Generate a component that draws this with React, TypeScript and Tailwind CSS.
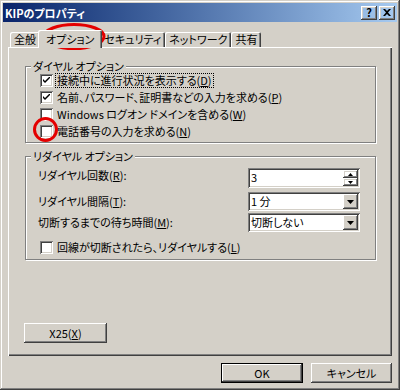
import React from "react";

const raised =
  "shadow-[inset_-1px_-1px_#404040,inset_1px_1px_#ffffff,inset_-2px_-2px_#808080,inset_2px_2px_#d4d0c8]";
const sunken =
  "shadow-[inset_1px_1px_#808080,inset_-1px_-1px_#ffffff,inset_2px_2px_#404040,inset_-2px_-2px_#d4d0c8]";

function Check({ checked }: { checked?: boolean }) {
  return (
    <div className={`w-[13px] h-[13px] bg-white shrink-0 flex items-center justify-center ${sunken}`}>
      {checked && (
        <svg width="7" height="7" viewBox="0 0 7 7">
          <path d="M0 2 L0 4 L2 6 L7 1 L7 -1 L2 4 Z" fill="#000" />
        </svg>
      )}
    </div>
  );
}

function CheckRow({ checked, children, focus }: { checked?: boolean; children: React.ReactNode; focus?: boolean }) {
  return (
    <div className="h-[17px] flex items-center gap-[3px]">
      <Check checked={checked} />
      <span className={`leading-[13px] px-[1px] ${focus ? "outline outline-1 outline-dotted outline-black" : ""}`}>
        {children}
      </span>
    </div>
  );
}

function Group({ title, children, className }: { title: string; children: React.ReactNode; className?: string }) {
  return (
    <div className={`relative border border-[#808080] shadow-[inset_1px_1px_#ffffff,1px_1px_#ffffff] ${className ?? ""}`}>
      <span className="absolute -top-[7px] left-[5px] bg-[#d4d0c8] px-[2px] leading-[12px]">{title}</span>
      {children}
    </div>
  );
}

function DropButton() {
  return (
    <div className={`w-[15px] h-full bg-[#d4d0c8] flex items-center justify-center ${raised}`}>
      <svg width="7" height="4" viewBox="0 0 7 4">
        <path d="M0 0 H7 L3.5 4 Z" fill="#000" />
      </svg>
    </div>
  );
}

function Combo({ value }: { value: string }) {
  return (
    <div className={`w-[112px] h-[19px] bg-white flex items-stretch p-[2px] ${sunken}`}>
      <span className="flex-1 leading-[15px] pl-[1px]">{value}</span>
      <DropButton />
    </div>
  );
}

function Tab({ label, selected }: { label: string; selected?: boolean }) {
  return (
    <div
      className={`flex items-center justify-center bg-[#d4d0c8] rounded-t-[2px] ${
        selected
          ? "relative z-10 h-[18px] -mb-[1px] -mx-[2px] px-[8px] shadow-[inset_1px_1px_#ffffff,inset_-1px_0_#404040,inset_-2px_0_#808080]"
          : "h-[15px] px-[4px] shadow-[inset_1px_1px_#ffffff,inset_-1px_0_#404040,inset_-2px_0_#808080]"
      }`}
    >
      <span className="leading-[13px]">{label}</span>
    </div>
  );
}

export default function App() {
  return (
    <div className="relative w-[400px] h-[390px] bg-[#d4d0c8] p-[3px] flex flex-col text-[11px] text-black font-['Noto_Sans_CJK_JP','Noto_Sans',sans-serif] [font-feature-settings:'palt'] shadow-[inset_-1px_-1px_#404040,inset_1px_1px_#d4d0c8,inset_-2px_-2px_#808080,inset_2px_2px_#ffffff]">
      {/* title bar */}
      <div className="h-[19px] flex items-center bg-gradient-to-r from-[#0a246a] to-[#a6caf0] pl-[2px] pr-[2px]">
        <span className="flex-1 text-white font-bold leading-[14px]">KIPのプロパティ</span>
        <div className="flex gap-[2px]">
          <div className={`w-[16px] h-[14px] flex items-center justify-center font-bold text-[11px] leading-none ${raised}`}>?</div>
          <div className={`w-[16px] h-[14px] flex items-center justify-center ${raised}`}>
            <svg width="8" height="7" viewBox="0 0 8 7">
              <path d="M0 0 H2 L4 2 L6 0 H8 L5 3.5 L8 7 H6 L4 5 L2 7 H0 L3 3.5 Z" fill="#000" />
            </svg>
          </div>
        </div>
      </div>

      <div className="flex-1 flex flex-col px-[5px]">
        {/* tabs */}
        <div className="mt-[8px] h-[17px] flex items-end pl-[2px]">
          <Tab label="全般" />
          <Tab label="オプション" selected />
          <Tab label="セキュリティ" />
          <Tab label="ネットワーク" />
          <Tab label="共有" />
        </div>

        {/* panel */}
        <div className="h-[309px] flex flex-col pt-[19px] pl-[17px] pr-[16px] shadow-[inset_1px_1px_#ffffff,inset_-1px_-1px_#404040,inset_-2px_-2px_#808080]">
          <Group title="ダイヤル オプション" className="pt-[5px] pb-[2px] pl-[14px]">
            <CheckRow checked focus>
              接続中に進行状況を表示する(<u>D</u>)
            </CheckRow>
            <CheckRow checked>
              名前、パスワード、証明書などの入力を求める(<u>P</u>)
            </CheckRow>
            <CheckRow>
              Windows ログオン ドメインを含める(<u>W</u>)
            </CheckRow>
            <CheckRow>
              電話番号の入力を求める(<u>N</u>)
            </CheckRow>
          </Group>

          <Group title="リダイヤル オプション" className="mt-[13px] pt-[11px] pb-[3px] pl-[12px] pr-[15px]">
            <div className="flex flex-col gap-[4px]">
              <div className="flex items-center justify-between">
                <span className="leading-[13px] -mt-[5px]">リダイヤル回数(<u>R</u>):</span>
                <div className={`w-[112px] h-[20px] bg-white flex items-stretch p-[2px] ${sunken}`}>
                  <span className="flex-1 leading-[14px] pl-[1px]">3</span>
                  <div className="w-[15px] flex flex-col">
                    <div className={`flex-1 flex items-center justify-center ${raised}`}>
                      <svg width="5" height="3" viewBox="0 0 5 3">
                        <path d="M0 3 H5 L2.5 0 Z" fill="#000" />
                      </svg>
                    </div>
                    <div className={`flex-1 flex items-center justify-center ${raised}`}>
                      <svg width="5" height="3" viewBox="0 0 5 3">
                        <path d="M0 0 H5 L2.5 3 Z" fill="#000" />
                      </svg>
                    </div>
                  </div>
                </div>
              </div>
              <div className="flex items-center justify-between">
                <span className="leading-[13px]">リダイヤル間隔(<u>T</u>):</span>
                <Combo value="1 分" />
              </div>
              <div className="flex items-center justify-between -mt-[2px]">
                <span className="leading-[13px]">切断するまでの待ち時間(<u>M</u>):</span>
                <Combo value="切断しない" />
              </div>
            </div>
            <div className="mt-[7px] pl-[2px]">
              <CheckRow>
                回線が切断されたら、リダイヤルする(<u>L</u>)
              </CheckRow>
            </div>
          </Group>

          <div className="flex-1" />
          <div className={`mb-[13px] -ml-[1px] w-[83px] h-[20px] flex items-center justify-center ${raised}`}>
            <span className="leading-[13px]">
              X25(<u>X</u>)
            </span>
          </div>
        </div>

        {/* dialog buttons */}
        <div className="mt-[7px] flex justify-end gap-[8px]">
          <div className="w-[82px] h-[20px] border border-black flex">
            <div className={`flex-1 flex items-center justify-center ${raised}`}>
              <span className="leading-[13px]">OK</span>
            </div>
          </div>
          <div className={`w-[81px] h-[20px] flex items-center justify-center ${raised}`}>
            <span className="leading-[13px]">キャンセル</span>
          </div>
        </div>
      </div>

      {/* red annotation marks */}
      <svg className="absolute inset-0 pointer-events-none" width="400" height="390" viewBox="0 0 400 390">
        <ellipse cx="74" cy="36.5" rx="30" ry="12" fill="none" stroke="#e40000" strokeWidth="3" />
        <circle cx="45.5" cy="129.5" r="11" fill="none" stroke="#e40000" strokeWidth="3" />
      </svg>
    </div>
  );
}
